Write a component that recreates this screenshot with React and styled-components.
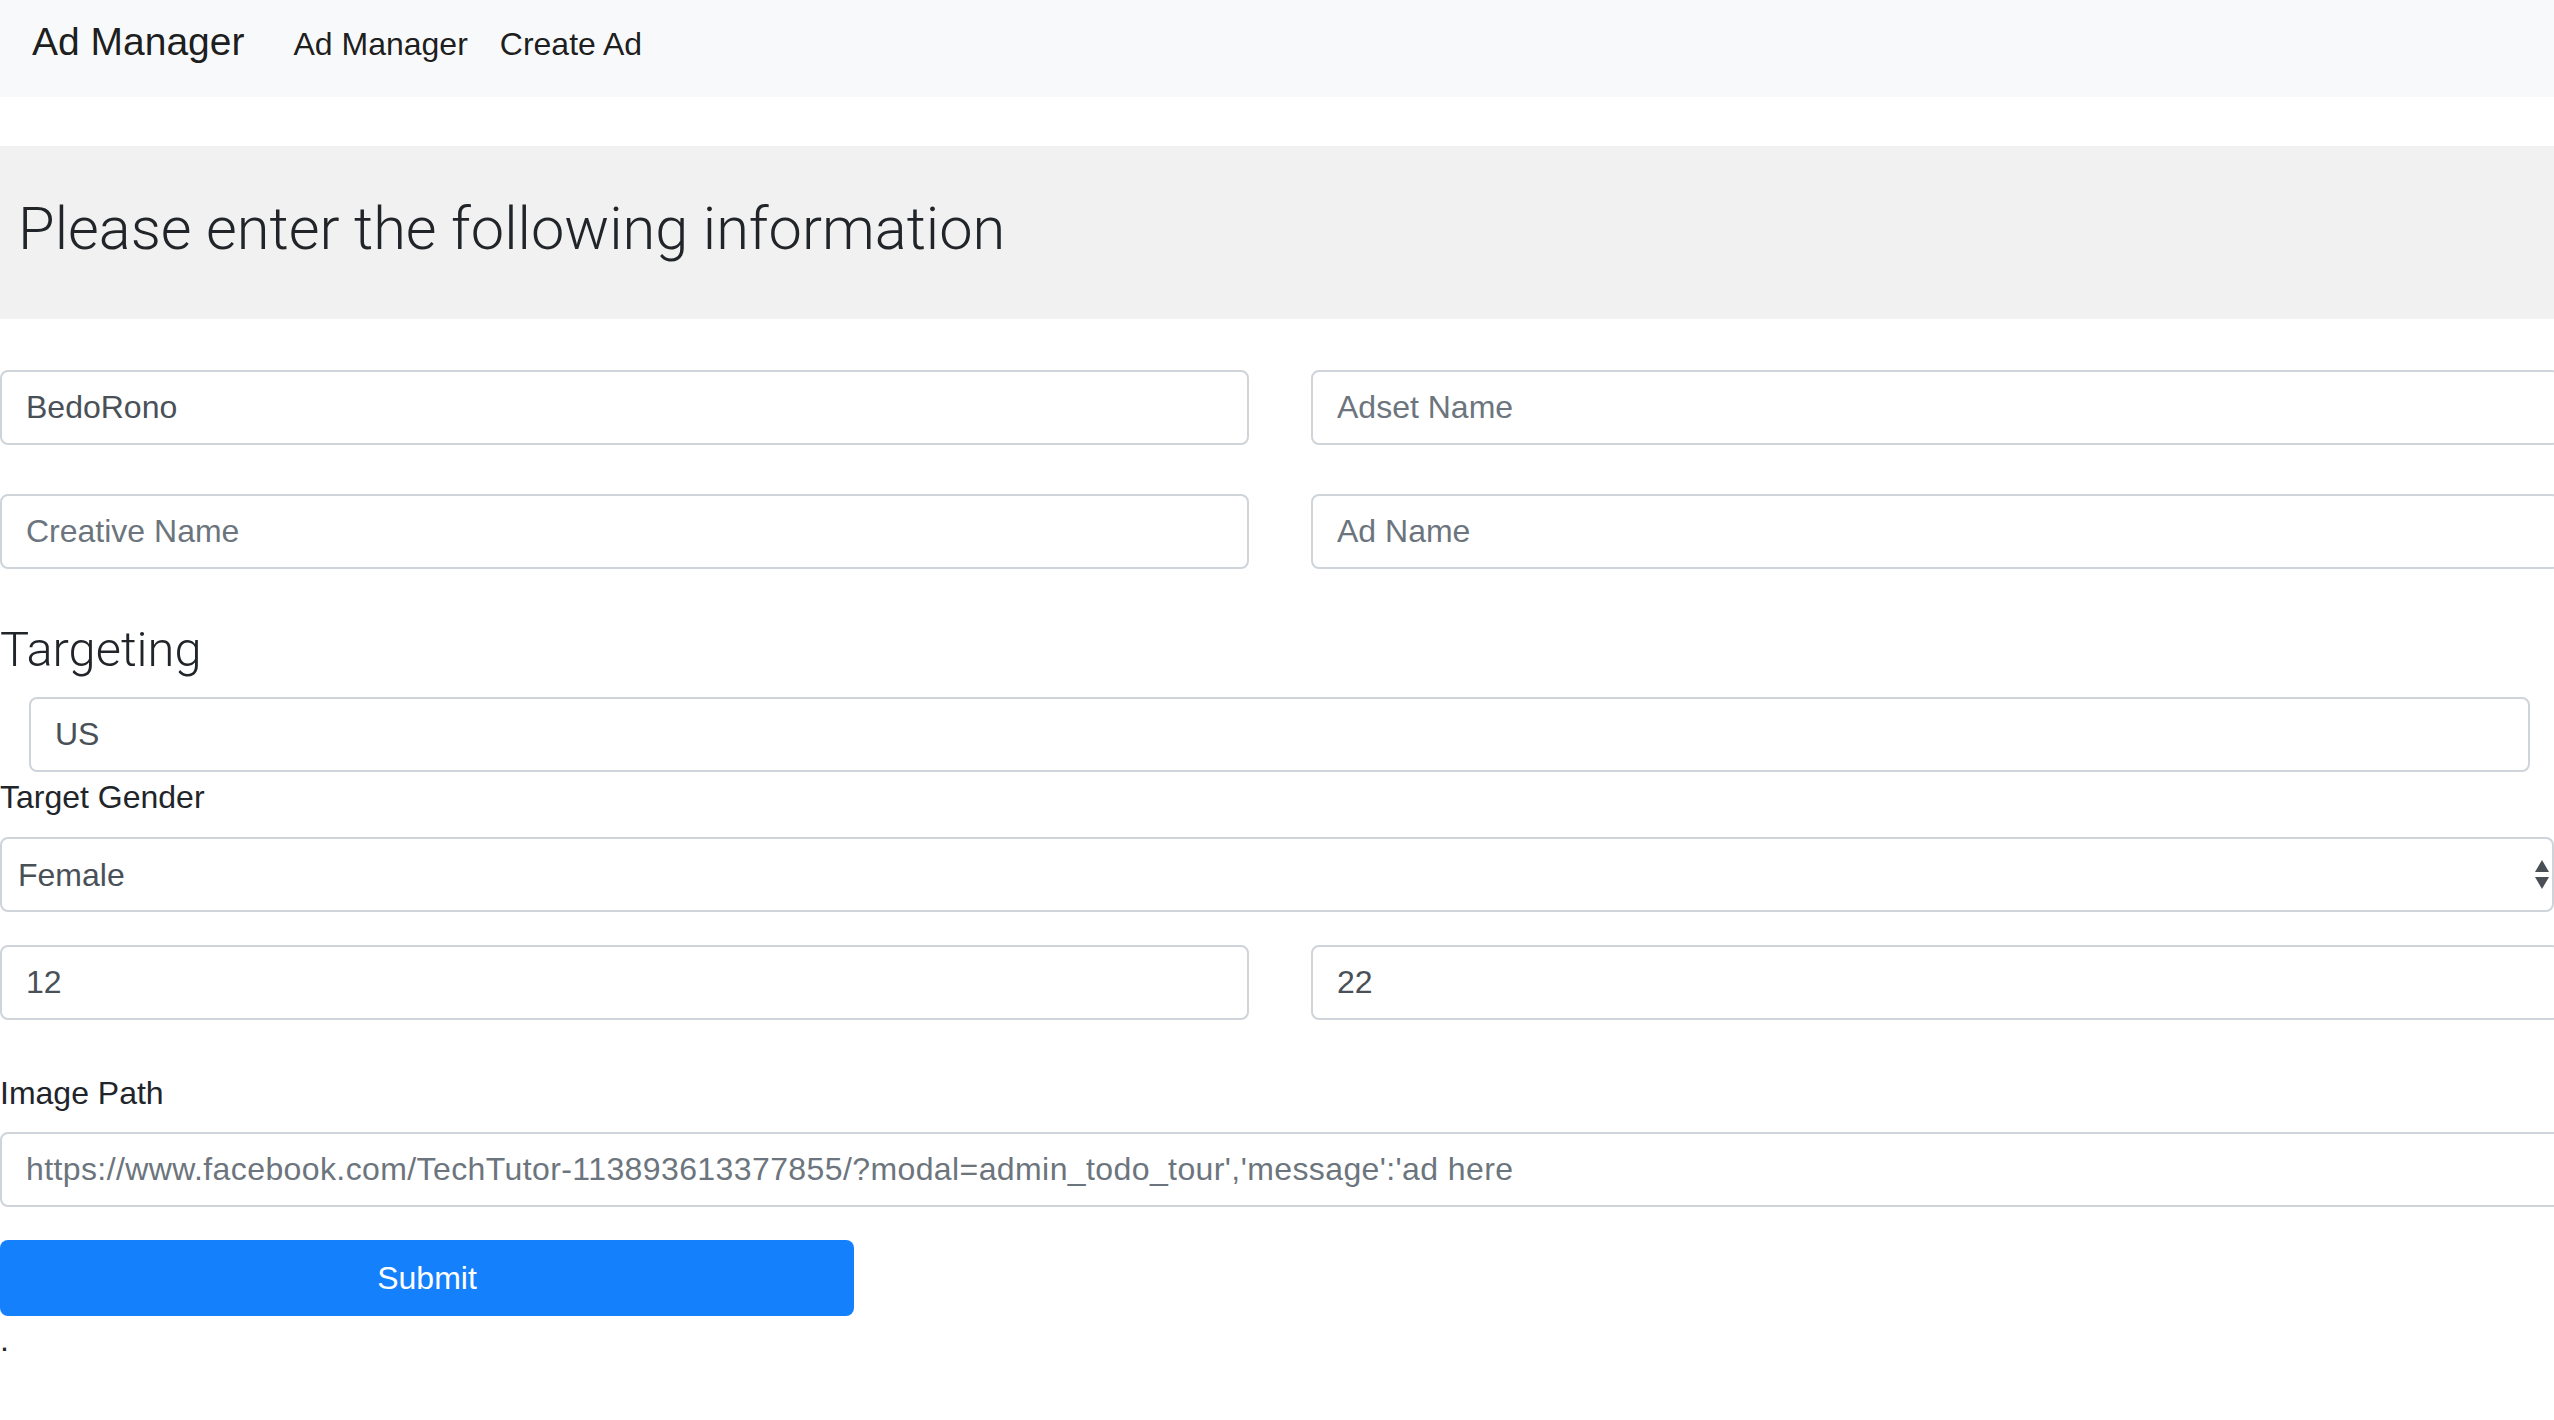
import React from 'react';
import styled, { createGlobalStyle } from "styled-components";

const GlobalStyle = createGlobalStyle`
  html, body {
    margin: 0;
    overflow-x: hidden;
  }
  body {
    font-family: "Liberation Sans", Arial, sans-serif;
    font-size: 32px;
    color: #212529;
    background: #fff;
  }
  * { box-sizing: border-box; }
`

const Navbar = styled.nav`
  height: 97px;
  background: #f8f9fa;
  display: flex;
  align-items: baseline;
  padding: 13px 32px 0;
`
const Brand = styled.a`
  font-size: 39px;
  line-height: 58px;
  color: rgba(0,0,0,.9);
  margin-right: 33px;
  text-decoration: none;
`
const NavLink = styled.a`
  font-size: 32px;
  line-height: 48px;
  padding: 0 16px;
  color: rgba(0,0,0,.9);
  text-decoration: none;
`

const Jumbotron = styled.div`
  margin-top: 49px;
  height: 173px;
  background: #f1f1f1;
  padding: 47px 18px 0;
`
const Heading = styled.h1`
  margin: 0;
  font-family: Roboto, "Liberation Sans", sans-serif;
  font-weight: 300;
  font-size: ${p => p.size}px;
  line-height: ${p => p.lh}px;
  color: #212529;
`
const Section = styled.div`
  margin-top: 51px;
`

const Form = styled.form`
  margin-top: 51px;
  display: flex;
  flex-direction: column;
  align-items: flex-start;
`
const Row = styled.div`
  display: grid;
  grid-template-columns: 1249px 1249px;
  column-gap: 62px;
  margin-top: ${p => p.top || 0}px;
`
const Input = styled.input`
  display: block;
  height: 75px;
  width: ${p => p.width || '100%'};
  margin-left: ${p => p.indent || 0}px;
  margin-top: ${p => p.top || 0}px;
  padding: 12px 24px;
  font-family: inherit;
  font-size: 32px;
  line-height: 48px;
  letter-spacing: ${p => p.spacing || 0}px;
  color: #495057;
  background: #fff;
  border: 2px solid #ced4da;
  border-radius: 8px;
  outline: none;
  &::placeholder { color: #6c757d; opacity: 1; }
`
const Label = styled.label`
  display: block;
  font-size: 32px;
  line-height: 48px;
  margin-top: ${p => p.top || 0}px;
  color: #212529;
`
const SelectWrap = styled.div`
  position: relative;
  width: 100%;
  margin-top: 16px;
`
const Select = styled.select`
  display: block;
  width: 100%;
  height: 75px;
  padding: 0 60px 0 16px;
  font-family: inherit;
  font-size: 32px;
  color: #495057;
  background: #fff;
  border: 2px solid #ced4da;
  border-radius: 8px;
  appearance: none;
  -webkit-appearance: none;
  outline: none;
`
const Arrows = styled.svg`
  position: absolute;
  right: 4px;
  top: 23px;
  pointer-events: none;
`
const Button = styled.button`
  margin-top: 33px;
  width: 854px;
  height: 76px;
  background: #1580fb;
  color: #fff;
  border: none;
  border-radius: 8px;
  font-family: inherit;
  font-size: 32px;
`
const Dot = styled.div`
  font-size: 32px;
  line-height: 48px;
`

const App = () => {
  return (
    <React.Fragment>
      <GlobalStyle />
      <Navbar>
        <Brand href="#">Ad Manager</Brand>
        <NavLink href="#">Ad Manager</NavLink>
        <NavLink href="#">Create Ad</NavLink>
      </Navbar>
      <Jumbotron>
        <Heading size={59.5} lh={72}>Please enter the following information</Heading>
      </Jumbotron>
      <Form onSubmit={e => e.preventDefault()}>
        <Row>
          <Input defaultValue="BedoRono" />
          <Input placeholder="Adset Name" />
        </Row>
        <Row top={49}>
          <Input placeholder="Creative Name" />
          <Input placeholder="Ad Name" />
        </Row>
        <Section>
          <Heading as="h3" size={48.8} lh={60}>Targeting</Heading>
        </Section>
        <Input defaultValue="US" indent={29} width="2501px" top={17} />
        <Label top={1}>Target Gender</Label>
        <SelectWrap>
          <Select defaultValue="Female">
            <option>Male</option>
            <option>Female</option>
          </Select>
          <Arrows width="16" height="30" viewBox="0 0 16 30">
            <path d="M8 0 L15 12 L1 12 Z" fill="#4a4f55" />
            <path d="M1 17 L15 17 L8 29 Z" fill="#4a4f55" />
          </Arrows>
        </SelectWrap>
        <Row top={33}>
          <Input defaultValue="12" />
          <Input defaultValue="22" />
        </Row>
        <Label top={49}>Image Path</Label>
        <Input top={15} width="2600px" spacing={0.4} placeholder="https://www.facebook.com/TechTutor-113893613377855/?modal=admin_todo_tour','message':'ad here" />
        <Button type="submit">Submit</Button>
        <Dot>.</Dot>
      </Form>
    </React.Fragment>
  )
}
export default App;
